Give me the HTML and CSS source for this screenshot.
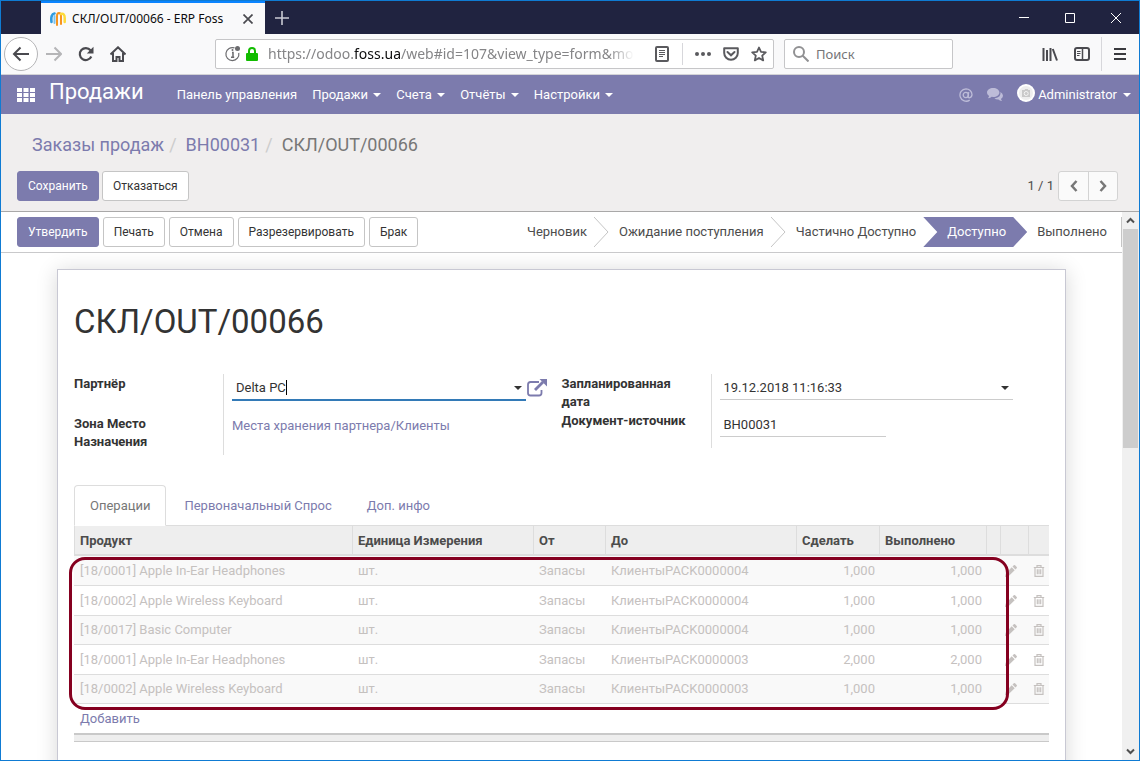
FILE: index.html
```html
<!DOCTYPE html>
<html lang="ru">
<head>
<meta charset="utf-8">
<title>СКЛ/OUT/00066 - ERP Foss</title>
<link rel="stylesheet" href="styles.css">
</head>
<body>
<svg class="defs" aria-hidden="true">
  <symbol id="pencil" viewBox="0 0 12 12"><path d="M0 12l.8-3.600L6.700 2.300l3 3-6.200 6zM7.500 1.600L8.800.3q.7-.6 1.300 0l1.600 1.600q.6.700 0 1.300l-1.300 1.300z"/></symbol>
  <symbol id="trash" viewBox="0 0 12 12"><path d="M.8 2.500h10.400M4 2.300V.7h4v1.600M2 2.500v8.800h8V2.500M4.300 4.300v5M6 4.300v5M7.700 4.300v5" fill="none" stroke="currentColor" stroke-width="1.200"/></symbol>
</svg>
<div class="window">
  <header class="titlebar">
    <div class="browser-tab">
      <svg class="favicon" width="16" height="16" viewBox="0 0 16 16" fill="none" stroke-linecap="round"><path d="M1.500 11Q.5 3 4.500 2.500" stroke="#2f9be0" stroke-width="2.600"/><path d="M4.500 12V5" stroke="#7cc4ee" stroke-width="2"/><path d="M7 14V5q0-3 2-3t2 3v8" stroke="#f7941e" stroke-width="2"/><path d="M11 3q3.700-1 3.700 4v4" stroke="#fddb3a" stroke-width="2.500"/></svg>
      <span class="tab-title">СКЛ/OUT/00066 - ERP Foss</span>
      <button class="plain tab-close" aria-label="Закрыть вкладку"><svg width="10" height="10" viewBox="0 0 10 10"><path d="M.5.500l9 9M9.500.500l-9 9" stroke="#4a4a4f" stroke-width="1.700"/></svg></button>
    </div>
    <button class="plain new-tab" aria-label="Новая вкладка"><svg width="14" height="14" viewBox="0 0 14 14"><path d="M7 0v14M0 7h14" stroke="#c9cad3" stroke-width="1.600"/></svg></button>
    <div class="window-buttons">
      <button class="plain" aria-label="Свернуть"><svg width="10" height="10"><path d="M0 4.500h10" stroke="#fff"/></svg></button>
      <button class="plain" aria-label="Развернуть"><svg width="10" height="10"><path d="M.5.500h9v9h-9z" stroke="#fff" fill="none"/></svg></button>
      <button class="plain" aria-label="Закрыть"><svg width="10" height="10"><path d="M0 0l10 10M10 0L0 10" stroke="#fff"/></svg></button>
    </div>
  </header>

  <div class="toolbar">
    <button class="plain back" aria-label="Назад"><svg width="18" height="16" viewBox="0 0 18 16"><path d="M17 8H2M8.500 1.500L2 8l6.500 6.500" fill="none" stroke="#4a4a4f" stroke-width="2"/></svg></button>
    <button class="plain tool" aria-label="Вперёд"><svg width="16" height="16" viewBox="0 0 16 16"><path d="M0 8h14M8.500 1.500L15 8l-6.500 6.500" fill="none" stroke="#b5b5b7" stroke-width="2"/></svg></button>
    <button class="plain tool" aria-label="Обновить"><svg width="16" height="16" viewBox="0 0 16 16"><path d="M13.300 10.500A6 6 0 1 1 12.500 4.300" fill="none" stroke="#4a4a4f" stroke-width="2.200"/><path d="M15.500.8v6.700H8.800z" fill="#4a4a4f"/></svg></button>
    <button class="plain tool" aria-label="Домой"><svg width="16" height="16" viewBox="0 0 16 16"><path d="M.5 8.500L8 1.300l7.500 7.200M3 7v8h3.500v-4h3v4H13V7" fill="none" stroke="#4a4a4f" stroke-width="2"/></svg></button>
    <div class="urlbar">
      <svg width="18" height="18" viewBox="0 0 18 18"><path d="M10.500 2.900a6.500 6.500 0 1 0 4.300 5" fill="none" stroke="#6b6b6e" stroke-width="1.200"/><path d="M8 7.500h1V12M7 12.200h3.200" stroke="#6b6b6e" stroke-width="1.500" fill="none"/><circle cx="8.500" cy="5" r="1" fill="#6b6b6e"/><circle cx="13.500" cy="3.500" r="2.500" fill="#6b6b6e"/></svg>
      <svg width="12" height="14" viewBox="0 0 12 14"><path d="M3 7V4a3 3 0 0 1 6 0v3" fill="none" stroke="#12bc00" stroke-width="2"/><rect y="6" width="12" height="8" rx="1" fill="#12bc00"/></svg>
      <div class="address" role="textbox" aria-label="Адрес"><span>https://odoo.<b>foss.ua</b>/web#id=107&amp;view_type=form&amp;mo</span></div>
      <button class="plain" aria-label="Режим чтения"><svg width="14" height="16" viewBox="0 0 14 16"><rect x="1" y="1" width="12" height="14" rx="1" fill="none" stroke="#5a5a5e" stroke-width="2"/><path d="M4 4.500h6M4 6.500h6M4 8.500h6M4 10.500h4" stroke="#5a5a5e"/></svg></button>
      <span class="url-sep"></span>
      <button class="plain" aria-label="Действия"><svg width="16" height="16" viewBox="0 0 16 16" fill="#5a5a5e"><circle cx="2" cy="8" r="2"/><circle cx="8" cy="8" r="2"/><circle cx="14" cy="8" r="2"/></svg></button>
      <button class="plain pocket" aria-label="Pocket"><svg width="16" height="16" viewBox="0 0 16 16"><path d="M1.200 2.200h13.600V7a6.800 6.800 0 0 1-13.600 0z" fill="none" stroke="#5a5a5e" stroke-width="2" stroke-linejoin="round"/><path d="M4.500 6L8 9.300 11.500 6" fill="none" stroke="#5a5a5e" stroke-width="2" stroke-linecap="round"/></svg></button>
      <button class="plain" aria-label="Закладка"><svg width="16" height="16" viewBox="0 0 16 16"><path d="M8 1.500l2 4.400 4.800.5-3.600 3.200 1 4.800L8 12l-4.200 2.400 1-4.800L1.200 6.400l4.800-.5z" fill="none" stroke="#5a5a5e" stroke-width="1.800" stroke-linejoin="round"/></svg></button>
    </div>
    <label class="searchbar">
      <svg width="16" height="16" viewBox="0 0 16 16"><circle cx="6" cy="6" r="5" fill="none" stroke="#919193" stroke-width="2"/><path d="M9.500 9.500l6 6" stroke="#919193" stroke-width="2"/></svg>
      <input type="text" placeholder="Поиск" aria-label="Поиск">
    </label>
    <div class="tool-right">
      <button class="plain" aria-label="Библиотека"><svg width="16" height="16" viewBox="0 0 16 16"><path d="M1.500 2v13M5 4v11M8.500 2v13M10.800 3L15 14.500" stroke="#4a4a4f" stroke-width="2"/></svg></button>
      <button class="plain" aria-label="Боковая панель"><svg width="16" height="16" viewBox="0 0 16 16"><rect x="1" y="2" width="14" height="12" rx="2" fill="none" stroke="#4a4a4f" stroke-width="2"/><path d="M8.500 2v12" stroke="#4a4a4f" stroke-width="1.500"/><path d="M3 5.500h3.500M3 7.500h3.500M3 9.500h2.500" stroke="#4a4a4f"/></svg></button>
      <span class="tool-sep"></span>
      <button class="plain" aria-label="Меню"><svg width="12" height="14" viewBox="0 0 12 14"><path d="M0 2h12M0 7h12M0 12h12" stroke="#3a3a3e" stroke-width="2"/></svg></button>
    </div>
  </div>

  <nav class="navbar">
    <button class="plain apps" aria-label="Приложения"><svg width="18" height="14" viewBox="0 0 18 14" fill="#fff"><path d="M0 0h5v4H0zM6.500 0h5v4h-5zM13 0h5v4h-5zM0 5h5v4H0zM6.500 5h5v4h-5zM13 5h5v4h-5zM0 10h5v4H0zM6.500 10h5v4h-5zM13 10h5v4h-5z"/></svg></button>
    <a class="brand" href="#">Продажи</a>
    <div class="menu">
      <a href="#">Панель управления</a>
      <a href="#">Продажи <i class="caret"></i></a>
      <a href="#">Счета <i class="caret"></i></a>
      <a href="#">Отчёты <i class="caret"></i></a>
      <a href="#">Настройки <i class="caret"></i></a>
    </div>
    <div class="systray">
      <a href="#" class="dim at" aria-label="Упоминания"><svg width="14" height="14" viewBox="0 0 14 14" fill="none" stroke="currentColor" stroke-width="1.300"><circle cx="6.800" cy="7" r="2.600"/><path d="M9.700 4.200L9 8.500q0 1.300 1.200 1.300Q13 9.400 13 6.500A6 5.900 0 0 0 7 .8a6.200 6.200 0 1 0 3.700 11.300"/></svg></a>
      <a href="#" class="dim" aria-label="Сообщения"><svg width="16" height="14" viewBox="0 0 16 14" fill="currentColor"><path d="M6.200 0C2.800 0 0 1.900 0 4.500c0 1.400.9 2.700 2.200 3.500L1 10.200c1.700-.1 2.900-.7 3.700-1.400l1.500.2c3.400 0 6.200-1.900 6.200-4.500S9.600 0 6.200 0z"/><path d="M13.400 4q1.200 5-6 6.500 1.500 1.100 4 1 1.200 1.200 3.600 1.400l-1.100-2q2.100-1.200 2.100-3.200T13.400 4z"/></svg></a>
      <a href="#" class="user"><svg class="avatar" width="18" height="18" viewBox="0 0 18 18"><circle cx="9" cy="9" r="9" fill="#fff"/><circle cx="9" cy="9" r="7" fill="#eee"/><path d="M5 6h2.500l.7-1h2.500l.6 1H13v7H5z" fill="#c9c9c9"/><circle cx="9.200" cy="9.500" r="2" fill="#c9c9c9" stroke="#f5f5f5"/></svg><span>Administrator</span><i class="caret"></i></a>
    </div>
  </nav>

  <section class="control-panel">
    <div class="breadcrumb"><a href="#">Заказы продаж</a><span class="slash">/</span><a href="#">ВН00031</a><span class="slash">/</span><span>СКЛ/OUT/00066</span></div>
    <div class="cp-row">
      <div class="btns"><button class="btn primary">Сохранить</button><button class="btn">Отказаться</button></div>
      <div class="pager"><span>1 / 1</span><div class="pager-btns">
        <button aria-label="Предыдущая"><svg width="8" height="12" viewBox="0 0 8 12"><path d="M6.500 1L2 6l4.500 5" fill="none" stroke="#777" stroke-width="2.500"/></svg></button><button aria-label="Следующая"><svg width="8" height="12" viewBox="0 0 8 12"><path d="M1.500 1L6 6l-4.500 5" fill="none" stroke="#777" stroke-width="2.500"/></svg></button></div></div>
    </div>
  </section>

  <div class="viewport">
    <main class="form-view">
      <div class="statusbar">
        <div class="btns wide"><button class="btn primary">Утвердить</button><button class="btn">Печать</button><button class="btn">Отмена</button><button class="btn">Разрезервировать</button><button class="btn">Брак</button></div>
        <div class="states">
          <button class="state">Черновик</button>
          <svg class="chevron" width="15" height="30"><path d="M0 0l14 15L0 30" fill="none" stroke="#c5c5c5"/></svg>
          <button class="state">Ожидание поступления</button>
          <svg class="chevron" width="15" height="30"><path d="M0 0l14 15L0 30" fill="none" stroke="#c5c5c5"/></svg>
          <button class="state">Частично Доступно</button>
          <button class="state active" aria-current="step">Доступно</button>
          <button class="state last">Выполнено</button>
        </div>
      </div>

      <div class="sheet">
        <h1>СКЛ/OUT/00066</h1>
        <div class="groups">
          <div class="group partner">
            <label for="partner">Партнёр</label>
            <div class="value many2one"><div class="field focus"><input id="partner" type="text" value="Delta PC"><span class="cursor"></span><i class="caret"></i></div><a href="#" aria-label="Открыть партнёра"><svg width="20" height="18" viewBox="0 0 20 18"><path d="M12 3H3.500Q1 3 1 5.500V14q0 2.500 2.500 2.500H12q2.500 0 2.500-2.500V11" fill="none" stroke="#7c7bad" stroke-width="1.800"/><path d="M8 11l8-8" stroke="#7c7bad" stroke-width="2.800"/><path d="M12.500 0H20v7.500z" fill="#7c7bad"/></svg></a></div>
            <span class="label">Зона Место Назначения</span>
            <div class="value"><a class="location" href="#">Места хранения партнера/Клиенты</a></div>
          </div>
          <div class="group schedule">
            <label for="date">Запланированная дата</label>
            <div class="value"><div class="field"><input id="date" type="text" value="19.12.2018 11:16:33"><i class="caret"></i></div></div>
            <label for="origin">Документ-источник</label>
            <div class="value"><div class="field short"><input id="origin" type="text" value="ВН00031"></div></div>
          </div>
        </div>
        <div class="tabs"><a class="current" href="#">Операции</a><a href="#">Первоначальный Спрос</a><a href="#">Доп. инфо</a></div>
        <div class="list">
          <table>
            <colgroup><col><col class="c-unit"><col class="c-from"><col class="c-to"><col class="c-todo"><col class="c-done"><col class="c-gap"><col class="c-edit"><col class="c-del"></colgroup>
            <thead><tr><th>Продукт</th><th>Единица Измерения</th><th>От</th><th>До</th><th>Сделать</th><th>Выполнено</th><th></th><th></th><th></th></tr></thead>
            <tbody>
              <tr><td>[18/0001] Apple In-Ear Headphones</td><td>шт.</td><td>Запасы</td><td>КлиентыPACK0000004</td><td class="num">1,000</td><td class="num">1,000</td><td></td><td class="icon"><button class="plain" aria-label="Изменить"><svg><use href="#pencil"/></svg></button></td><td class="icon"><button class="plain" aria-label="Удалить"><svg><use href="#trash"/></svg></button></td></tr>
              <tr><td>[18/0002] Apple Wireless Keyboard</td><td>шт.</td><td>Запасы</td><td>КлиентыPACK0000004</td><td class="num">1,000</td><td class="num">1,000</td><td></td><td class="icon"><button class="plain" aria-label="Изменить"><svg><use href="#pencil"/></svg></button></td><td class="icon"><button class="plain" aria-label="Удалить"><svg><use href="#trash"/></svg></button></td></tr>
              <tr><td>[18/0017] Basic Computer</td><td>шт.</td><td>Запасы</td><td>КлиентыPACK0000004</td><td class="num">1,000</td><td class="num">1,000</td><td></td><td class="icon"><button class="plain" aria-label="Изменить"><svg><use href="#pencil"/></svg></button></td><td class="icon"><button class="plain" aria-label="Удалить"><svg><use href="#trash"/></svg></button></td></tr>
              <tr><td>[18/0001] Apple In-Ear Headphones</td><td>шт.</td><td>Запасы</td><td>КлиентыPACK0000003</td><td class="num">2,000</td><td class="num">2,000</td><td></td><td class="icon"><button class="plain" aria-label="Изменить"><svg><use href="#pencil"/></svg></button></td><td class="icon"><button class="plain" aria-label="Удалить"><svg><use href="#trash"/></svg></button></td></tr>
              <tr><td>[18/0002] Apple Wireless Keyboard</td><td>шт.</td><td>Запасы</td><td>КлиентыPACK0000003</td><td class="num">1,000</td><td class="num">1,000</td><td></td><td class="icon"><button class="plain" aria-label="Изменить"><svg><use href="#pencil"/></svg></button></td><td class="icon"><button class="plain" aria-label="Удалить"><svg><use href="#trash"/></svg></button></td></tr>
              <tr class="add"><td colspan="9"><a href="#">Добавить</a></td></tr>
            </tbody>
          </table>
          <div class="list-foot"></div>
          <div class="highlight"></div>
        </div>
      </div>
    </main>
    <div class="scrollbar" aria-hidden="true">
      <svg width="17" height="17"><path d="M5 10.500L8.500 7l3.500 3.500" fill="none" stroke="#505050" stroke-width="2"/></svg>
      <div class="thumb"></div>
      <svg class="down" width="17" height="17"><path d="M5 6.500L8.500 10 12 6.500" fill="none" stroke="#505050" stroke-width="2"/></svg>
    </div>
  </div>
</div>
</body>
</html>
```

FILE: styles.css
```css
* { box-sizing: border-box; }
body { margin: 0; font: 13px/18px Roboto, sans-serif; color: #4c4c4c; background: #fff; }
a { color: #7c7bad; text-decoration: none; }
svg { display: block; flex: none; }
button, input { font: inherit; color: inherit; }
.defs { position: absolute; width: 0; height: 0; }
.plain { display: flex; align-items: center; justify-content: center; padding: 0; border: 0; background: none; }
.window { display: flex; flex-direction: column; height: 100vh; border: 1px solid #0f7bd3; overflow: hidden; }
.caret { display: inline-block; width: 0; height: 0; border: 4px solid transparent; border-top-color: currentColor; border-bottom: 0; vertical-align: middle; }

/* Browser chrome */
.titlebar { display: flex; flex: none; height: 33px; background: #202340; padding-left: 40px; }
.browser-tab { display: flex; align-items: center; width: 224px; padding: 0 12px 0 9px; border-top: 2px solid #0a84ff; background: #f9f9fa; }
.tab-title { flex: 1; margin-left: 6px; font: 12px/16px "Noto Sans", sans-serif; color: #0c0c0d; white-space: nowrap; overflow: hidden; }
.new-tab { width: 34px; }
.window-buttons { display: flex; margin-left: auto; }
.window-buttons button { width: 46px; }
.toolbar { display: flex; align-items: center; flex: none; height: 41px; padding: 0 13px 0 3px; background: #f9f9fa; border-bottom: 1px solid #d3d3d6; }
.back { width: 34px; height: 34px; border: 1px solid #b5b5b7; border-radius: 50%; background: #fff; }
.tool { width: 32px; height: 32px; }
.urlbar, .searchbar { display: flex; align-items: center; height: 30px; border: 1px solid #c6c6c8; border-radius: 2px; background: #fff; }
.urlbar { flex: 1; min-width: 0; margin-left: 81px; padding: 0 6px 0 8px; gap: 4px; }
.address { flex: 1; min-width: 0; margin: 0 8px 0 6px; font: 14px/20px "Noto Sans", sans-serif; color: #858587; white-space: nowrap; overflow: hidden; }
.address span { display: inline-block; mask-image: linear-gradient(to right, #000 93%, transparent); }
.address b { font-weight: 400; color: #0c0c0d; }
.url-sep { width: 1px; height: 22px; margin: 0 8px 0 9px; background: #d7d7db; }
.pocket { margin: 0 8px; }
.searchbar { width: 169px; margin-left: 10px; padding-left: 8px; gap: 7px; }
.searchbar input { width: 100%; min-width: 0; padding: 0; border: 0; outline: 0; background: none; font: 13px/20px "Noto Sans", sans-serif; }
.searchbar input::placeholder { color: #757577; opacity: 1; }
.tool-right { display: flex; align-items: center; gap: 16px; margin-left: 89px; }
.tool-sep { width: 1px; height: 34px; margin: 0 -4px 0 -5px; background: #d7d7db; }

/* Application navbar */
.navbar { display: flex; align-items: center; flex: none; height: 39px; padding: 0 8px 0 16px; background: #7c7bad; color: #fff; }
.navbar a { color: #fff; }
.brand { margin: 0 33px 5px 14px; font-size: 22px; line-height: 28px; }
.menu { display: flex; gap: 15px; white-space: nowrap; }
.menu .caret { margin-left: 2px; }
.systray { display: flex; align-items: center; gap: 14px; margin-left: auto; }
.systray .dim { color: #bdbcd8; }
.user { display: flex; align-items: center; gap: 3px; }
.user .caret { margin-left: 3px; }
.avatar { margin-bottom: 4px; }

/* Control panel */
.control-panel { flex: none; padding: 18px 16px 10px; background: #f0eeee; border-bottom: 1px solid #a9a8a8; }
.breadcrumb { padding: 0 15px; font-size: 18px; line-height: 26px; color: #777; }
.slash { padding: 0 9px 0 5px; color: #ccc; }
.cp-row { display: flex; justify-content: space-between; margin-top: 13px; }
.btns { display: flex; gap: 3px; }
.btns.wide { gap: 4px; }
.btn { height: 30px; padding: 0 10px; border: 1px solid #c5c5c5; border-radius: 3px; background: #fff; color: #333; font-size: 12px; line-height: 18px; white-space: nowrap; }
.btn.primary { border-color: #7c7bad; background: #7c7bad; color: #fff; }
.pager { display: flex; align-items: center; gap: 4px; padding-right: 5px; }
.pager-btns { display: flex; border: 1px solid #d3d3d3; border-radius: 3px; overflow: hidden; background: #fafafa; }
.pager-btns button { display: flex; align-items: center; justify-content: center; width: 29px; height: 28px; padding: 0; border: 0; background: none; }
.pager-btns button + button { border-left: 1px solid #d3d3d3; }

/* Form */
.viewport { display: flex; flex: 1; min-height: 0; }
.form-view { flex: 1; min-width: 0; overflow: hidden; }
.statusbar { display: flex; justify-content: space-between; padding: 5px 0 5px 16px; border-bottom: 1px solid #c9c9cb; background: #fff; position: relative; }
.states { display: flex; height: 30px; }
.state { padding: 0 7px 0 10px; border: 0; background: none; white-space: nowrap; }
.state.active { padding: 0 21px 0 24px; color: #fff; background: #7c7bad; clip-path: polygon(0 0, calc(100% - 14px) 0, 100% 50%, calc(100% - 14px) 100%, 0 100%, 14px 50%); }
.state.last { padding-right: 14px; border-right: 1px solid #c5c5c5; }
.sheet { min-height: 100vh; margin: 16px 56px 0; padding: 30px 16px; border: 1px solid #c8c8d3; background: #fff; box-shadow: 0 2px 20px rgba(0, 0, 0, .16); }
h1 { margin: 0; font-size: 33px; line-height: 44px; font-weight: 400; color: #333; }
.groups { display: grid; grid-template-columns: 1fr 1fr; margin-top: 30px; align-items: start; }
.group { display: grid; grid-template-columns: 149px 1fr; color: #333; }
.group label, .group .label { padding: 1px 24px 0 0; line-height: 18px; font-weight: 700; }
.group .value { padding: 3px 0 0 8px; border-left: 1px solid #ddd; }
.partner { grid-template-rows: 40px 41px; margin-right: 15px; }
.schedule { grid-template-rows: 37px 37px; margin-right: 36px; }
.many2one { display: flex; align-items: flex-start; gap: 1px; }
.many2one > a { margin-top: 2px; }
.field { display: flex; align-items: center; flex: 1; position: relative; height: 23px; padding: 0 4px; border-bottom: 1px solid #ccc; }
.field.focus { height: 24px; border-bottom: 2px solid #337ab7; }
.field.short { width: 166px; }
.field input { flex: 1; min-width: 0; width: 100%; padding: 0; border: 0; outline: 0; background: none; }
.cursor { position: absolute; left: 54px; top: 3px; width: 1px; height: 15px; background: #000; }
.location { display: block; line-height: 18px; }
.tabs { display: flex; margin-top: 30px; height: 41px; border-bottom: 1px solid #ddd; }
.tabs a { height: 41px; margin-right: 1px; padding: 11px 16px; border: 1px solid transparent; border-radius: 4px 4px 0 0; }
.tabs .current { padding: 11px 15px; border-color: #ddd; border-bottom-color: #fff; background: #fff; color: #777; }

/* Operations list */
.list { position: relative; }
table { width: 100%; border-collapse: separate; border-spacing: 0; table-layout: fixed; }
th, td { padding: 0 5px; overflow: hidden; white-space: nowrap; text-align: left; }
th { height: 30px; padding-top: 2px; background: #eee; color: #4c4c4c; font-weight: 700; border-bottom: 2px solid #ddd; border-left: 1px solid #ddd; }
td { height: 30px; border-bottom: 1px solid #ddd; color: #c5c1bf; padding-left: 6px; }
tr:nth-child(odd) td { background: #f9f9f9; }
tbody tr:nth-child(3) td, tbody tr:nth-child(5) td { height: 29px; }
.c-unit { width: 181px; }
.c-from { width: 72px; }
.c-to { width: 191px; }
.c-todo { width: 83px; }
.c-done { width: 107px; }
.c-gap { width: 14px; }
.c-edit { width: 28px; }
.c-del { width: 21px; }
td.num { text-align: right; padding-right: 4px; }
td.icon { padding: 0 5px; }
td.icon svg { width: 12px; height: 12px; fill: currentColor; }
tr.add td { height: 29px; border-bottom: 0; }
.list-foot { height: 9px; border-top: 2px solid #c9c9c9; border-bottom: 1px solid #c9c9c9; background: #eee; }
.highlight { position: absolute; left: -5px; right: 40px; top: 31px; height: 153px; border: 3px solid #850020; border-radius: 16px; pointer-events: none; }

/* Page scrollbar */
.scrollbar { display: flex; flex-direction: column; flex: none; width: 17px; background: #f0f0f0; }
.thumb { height: 40%; margin: 0 1px; background: #cdcdcd; }
.scrollbar .down { margin-top: auto; }
```
